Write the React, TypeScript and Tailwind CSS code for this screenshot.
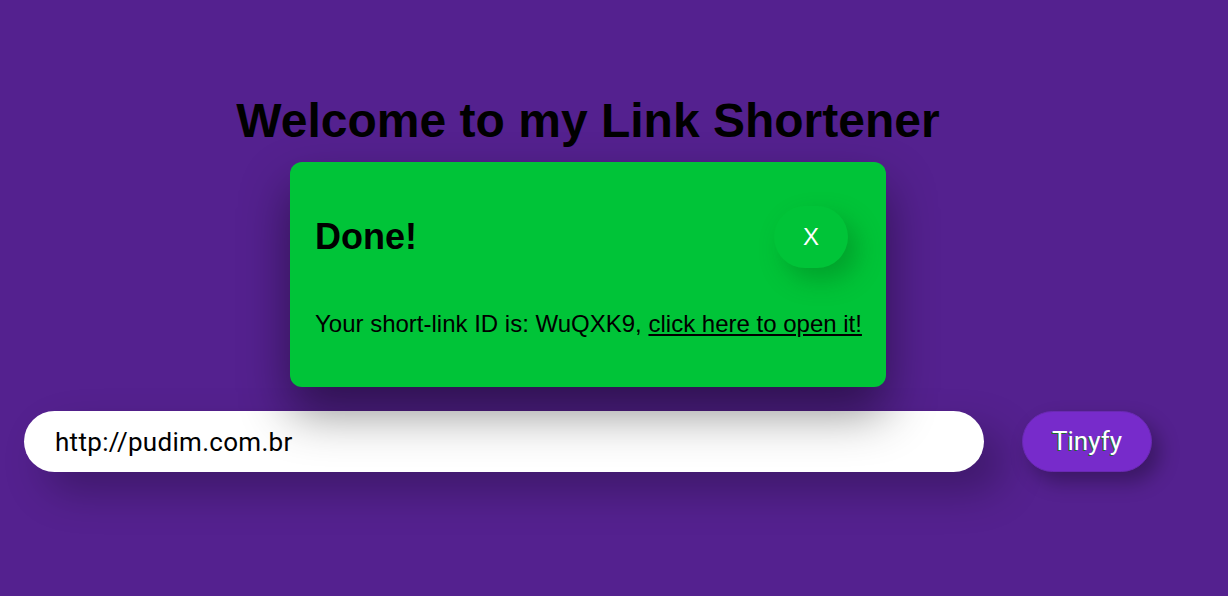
import React, { useState } from 'react';

const App: React.FC = () => {
  const [url, setUrl] = useState('http://pudim.com.br');
  const [open, setOpen] = useState(true);

  return (
    <div className="relative min-h-[596px] w-full bg-[#54218f] overflow-hidden" style={{ fontFamily: '"Liberation Sans", Arial, sans-serif' }}>
      <div className="flex flex-col w-[1128px] ml-6">
        <h1 className="pt-[93px] text-center text-[48px] leading-[55px] font-bold text-black">
          Welcome to my Link Shortener
        </h1>

        {/* Input row */}
        <div className="mt-[263px] flex items-center justify-between">
          <input
            value={url}
            onChange={e => setUrl(e.target.value)}
            className="w-[960px] h-[61px] rounded-full bg-white px-[31px] text-[26px] tracking-[0.3px] text-black outline-none shadow-[20px_20px_40px_rgba(0,0,0,0.25)] font-['Roboto',sans-serif]"
          />
          <button className="w-[130px] h-[61px] rounded-full border border-[#6a29b3] bg-[#772bcb] text-white text-[26px] shadow-[8px_10px_20px_rgba(0,0,0,0.3)] [text-shadow:-1px_1px_0_#1f6b2a] font-['Roboto',sans-serif]">
            Tinyfy
          </button>
        </div>
      </div>

      {/* Modal */}
      {open && (
        <div className="absolute left-[290px] top-[162px] w-[596px] h-[225px] rounded-xl bg-[#00c438] shadow-[0_25px_50px_rgba(0,0,0,0.45)] flex flex-col px-[25px]">
          <div className="flex items-center justify-between mt-[44px]">
            <h2 className="text-[36px] leading-none font-bold text-black">Done!</h2>
            <button
              onClick={() => setOpen(false)}
              className="mr-[13px] w-[74px] h-[62px] rounded-full bg-[#00c438] text-white text-[24px] shadow-[10px_12px_24px_rgba(0,100,20,0.35)]"
            >
              X
            </button>
          </div>
          <p className="mt-[42px] text-[24px] leading-7 text-black whitespace-nowrap">
            Your short-link ID is: WuQXK9, <a href="#" className="underline">click here to open it!</a>
          </p>
        </div>
      )}
    </div>
  );
};

export default App;
